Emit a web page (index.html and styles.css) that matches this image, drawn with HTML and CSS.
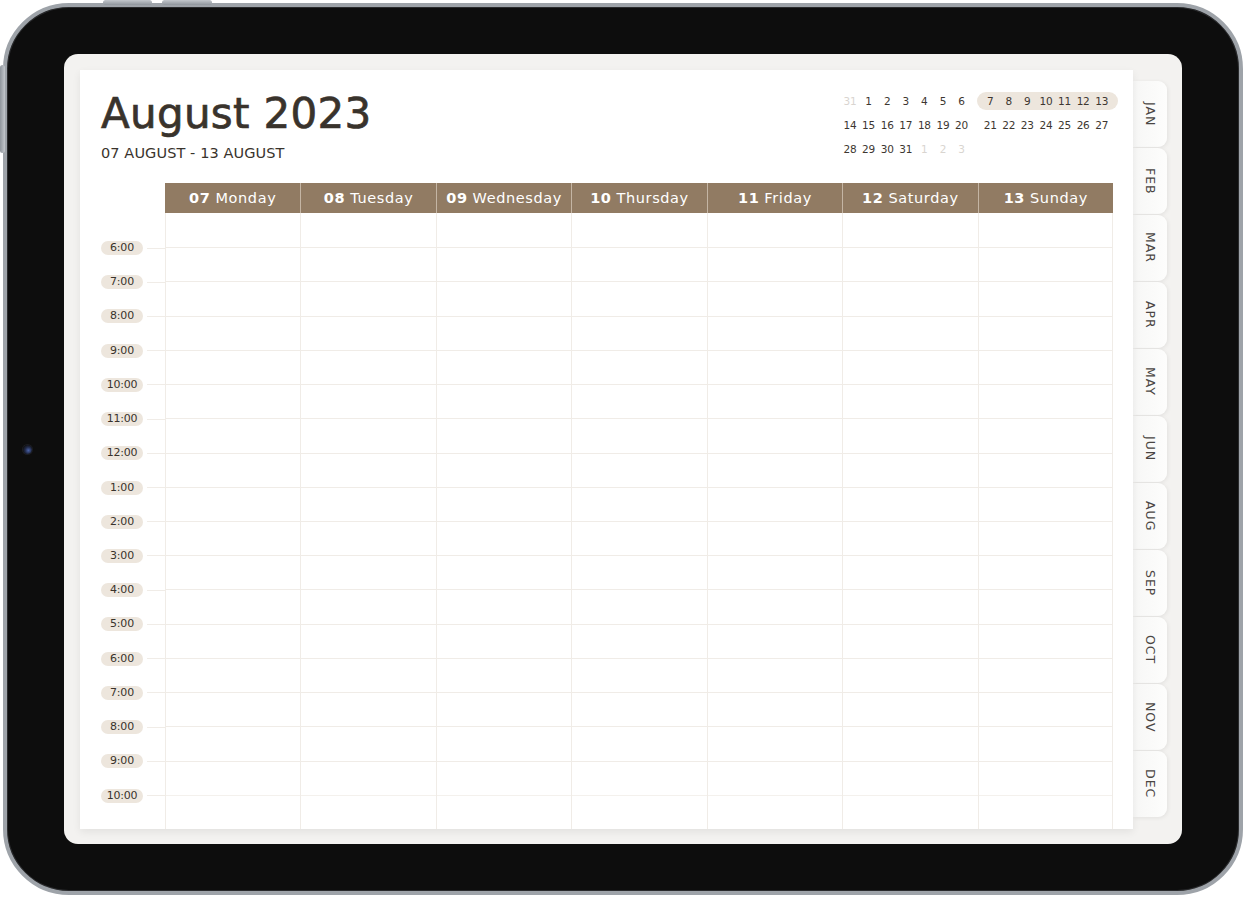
FILE: index.html
```html
<!DOCTYPE html>
<html lang="en">
<head>
<meta charset="utf-8">
<title>August 2023 Weekly Planner</title>
<link rel="stylesheet" href="styles.css">
</head>
<body>
<div class="device">
  <span class="hw-btn top-a"></span>
  <span class="hw-btn top-b"></span>
  <span class="hw-btn side"></span>
  <span class="camera"></span>
  <div class="screen">
    <main class="paper">
      <header class="head">
        <div class="titles">
          <h1 class="title">August 2023</h1>
          <p class="range">07 AUGUST - 13 AUGUST</p>
        </div>
        <div class="mini">
          <div class="mini-block">
            <div class="mini-row"><span class="faded">31</span><span>1</span><span>2</span><span>3</span><span>4</span><span>5</span><span>6</span></div>
            <div class="mini-row"><span>14</span><span>15</span><span>16</span><span>17</span><span>18</span><span>19</span><span>20</span></div>
            <div class="mini-row"><span>28</span><span>29</span><span>30</span><span>31</span><span class="faded">1</span><span class="faded">2</span><span class="faded">3</span></div>
          </div>
          <div class="mini-block second">
            <div class="mini-row current"><span>7</span><span>8</span><span>9</span><span>10</span><span>11</span><span>12</span><span>13</span></div>
            <div class="mini-row"><span>21</span><span>22</span><span>23</span><span>24</span><span>25</span><span>26</span><span>27</span></div>
            <div class="mini-row"></div>
          </div>
        </div>
      </header>

      <section class="planner">
        <div class="days-head">
          <div class="corner"></div>
          <div class="day-title"><b>07</b> Monday</div>
          <div class="day-title"><b>08</b> Tuesday</div>
          <div class="day-title"><b>09</b> Wednesday</div>
          <div class="day-title"><b>10</b> Thursday</div>
          <div class="day-title"><b>11</b> Friday</div>
          <div class="day-title"><b>12</b> Saturday</div>
          <div class="day-title"><b>13</b> Sunday</div>
        </div>
        <div class="grid">
          <div class="times">
            <div class="time"><span class="pill">6:00</span><i class="stub"></i></div>
            <div class="time"><span class="pill">7:00</span><i class="stub"></i></div>
            <div class="time"><span class="pill">8:00</span><i class="stub"></i></div>
            <div class="time"><span class="pill">9:00</span><i class="stub"></i></div>
            <div class="time"><span class="pill">10:00</span><i class="stub"></i></div>
            <div class="time"><span class="pill">11:00</span><i class="stub"></i></div>
            <div class="time"><span class="pill">12:00</span><i class="stub"></i></div>
            <div class="time"><span class="pill">1:00</span><i class="stub"></i></div>
            <div class="time"><span class="pill">2:00</span><i class="stub"></i></div>
            <div class="time"><span class="pill">3:00</span><i class="stub"></i></div>
            <div class="time"><span class="pill">4:00</span><i class="stub"></i></div>
            <div class="time"><span class="pill">5:00</span><i class="stub"></i></div>
            <div class="time"><span class="pill">6:00</span><i class="stub"></i></div>
            <div class="time"><span class="pill">7:00</span><i class="stub"></i></div>
            <div class="time"><span class="pill">8:00</span><i class="stub"></i></div>
            <div class="time"><span class="pill">9:00</span><i class="stub"></i></div>
            <div class="time"><span class="pill">10:00</span><i class="stub"></i></div>
          </div>
          <div class="day-col"></div>
          <div class="day-col"></div>
          <div class="day-col"></div>
          <div class="day-col"></div>
          <div class="day-col"></div>
          <div class="day-col"></div>
          <div class="day-col last"></div>
        </div>
      </section>
    </main>

    <nav class="tabs">
      <a class="tab">JAN</a>
      <a class="tab">FEB</a>
      <a class="tab">MAR</a>
      <a class="tab">APR</a>
      <a class="tab">MAY</a>
      <a class="tab">JUN</a>
      <a class="tab">AUG</a>
      <a class="tab">SEP</a>
      <a class="tab">OCT</a>
      <a class="tab">NOV</a>
      <a class="tab">DEC</a>
    </nav>
  </div>
</div>
</body>
</html>
```

FILE: styles.css
```css
* { box-sizing: border-box; }

html, body {
  margin: 0;
  padding: 0;
  background: #ffffff;
}

body {
  font-family: "DejaVu Sans", "Liberation Sans", sans-serif;
  color: #38332d;
  width: 1245px;
  height: 897px;
  overflow: hidden;
}

/* ---------- device ---------- */
.device {
  position: relative;
  margin: 3px 0 0 3px;
  width: 1240px;
  height: 892px;
  border: 4px solid #9ea3a9;
  border-radius: 66px;
  background: #0d0d0d;
  padding: 47px 57px 47px 57px;
  box-shadow: inset 0 0 0 1px #2a2b2d;
}

.hw-btn {
  position: absolute;
  background: linear-gradient(#c3c7cc, #8f959c);
  border-radius: 3px;
}
.top-a { top: -7px; left: 96px; width: 49px; height: 5px; }
.top-b { top: -7px; left: 155px; width: 50px; height: 5px; }
.side {
  left: -7px; top: 58px; width: 5px; height: 88px;
  background: linear-gradient(90deg, #8f959c, #c3c7cc);
}

.camera {
  position: absolute;
  left: 16px;
  top: 438px;
  width: 9px;
  height: 9px;
  border-radius: 50%;
  background: radial-gradient(circle at 60% 60%, #4a62a8 0, #1f2744 45%, #121317 75%);
  box-shadow: 0 0 0 1px #1c1d21;
}

/* ---------- screen ---------- */
.screen {
  width: 1118px;
  height: 790px;
  border-radius: 14px;
  background: #f3f2f0;
  padding: 16px 15px 15px 16px;
  display: flex;
  overflow: hidden;
}

.paper {
  width: 1053px;
  height: 759px;
  background: #ffffff;
  padding: 22px 20px 0 21px;
  display: flex;
  flex-direction: column;
  box-shadow: 0 3px 8px rgba(0, 0, 0, 0.07);
  position: relative;
  z-index: 1;
}

/* ---------- header ---------- */
.head {
  height: 91px;
  display: flex;
  justify-content: space-between;
  align-items: flex-start;
}

.title {
  margin: 0;
  font-size: 42px;
  line-height: 40px;
  font-weight: 400;
  letter-spacing: 0.3px;
  color: #39332c;
  -webkit-text-stroke: 0.7px #39332c;
  padding-top: 2px;
}

.range {
  margin: 10px 0 0 0;
  font-size: 14.5px;
  line-height: 18px;
  letter-spacing: 0.1px;
  color: #39332c;
}

.mini {
  display: flex;
  gap: 6px;
  margin-right: -5px;
}

.mini-block {
  display: flex;
  flex-direction: column;
  gap: 6px;
}

.mini-row {
  display: flex;
  height: 18px;
  align-items: center;
}

.mini-block.second .mini-row {
  padding: 0 7px 0 4px;
}

.mini-row.current {
  background: #ede6dd;
  border-radius: 9px;
}

.mini-row span {
  width: 18.6px;
  text-align: center;
  font-size: 10.5px;
  letter-spacing: -0.2px;
  color: #3d3731;
}

.mini-row span.faded {
  color: #d9d5d0;
}

/* ---------- planner ---------- */
.planner {
  flex: 1;
  display: flex;
  flex-direction: column;
}

.days-head {
  display: grid;
  grid-template-columns: 64px repeat(7, 1fr);
  height: 30px;
}

.day-title {
  background: #917b63;
  color: #ffffff;
  font-size: 14.5px;
  letter-spacing: 0.6px;
  display: flex;
  align-items: center;
  justify-content: center;
  gap: 5px;
  border-left: 1px solid #c4b5a4;
}

.day-title:nth-child(2) {
  border-left: none;
}

.day-title b {
  font-weight: 700;
}

.grid {
  flex: 1;
  display: grid;
  grid-template-columns: 64px repeat(7, 1fr);
  background-image: repeating-linear-gradient(
    to bottom,
    transparent 0,
    transparent 33.22px,
    #f0ece7 33.22px,
    #f0ece7 34.22px
  );
  background-size: calc(100% - 64px) 581.74px;
  background-position: 64px 1px;
  background-repeat: no-repeat;
}

.times {
  display: flex;
  flex-direction: column;
  padding-top: 28px;
  gap: 20.22px;
  background: #ffffff;
}

.time {
  display: flex;
  align-items: center;
  height: 14px;
}

.pill {
  width: 42px;
  height: 14px;
  border-radius: 7px;
  background: #ede6dd;
  font-size: 11px;
  letter-spacing: -0.2px;
  line-height: 14px;
  text-align: center;
  color: #39332c;
}

.stub {
  flex: 1;
  margin-left: 4px;
  height: 1px;
  background: #f0ece7;
}

.day-col {
  border-left: 1px solid #f0ece7;
}

.day-col.last {
  border-right: 1px solid #f0ece7;
}

/* ---------- month tabs ---------- */
.tabs {
  margin-top: 11px;
  display: flex;
  flex-direction: column;
  gap: 1px;
}

.tab {
  width: 34px;
  height: 66px;
  background: linear-gradient(90deg, #f7f7f6, #fdfdfc);
  border-radius: 0 9px 9px 0;
  box-shadow: 1px 1px 4px rgba(0, 0, 0, 0.07);
  writing-mode: vertical-rl;
  display: flex;
  align-items: center;
  justify-content: center;
  font-size: 12.5px;
  letter-spacing: 1px;
  color: #4a4643;
}
```
